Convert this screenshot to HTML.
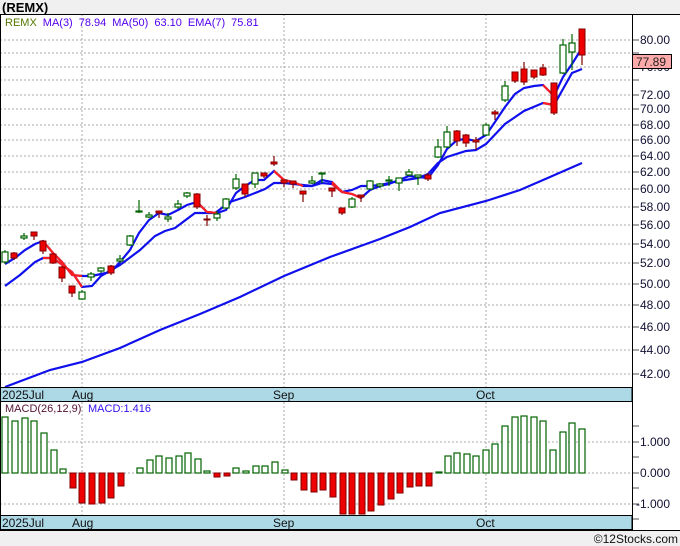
<!DOCTYPE html>
<html><head><meta charset="utf-8"><style>
html,body{margin:0;padding:0;background:#f0f0f0;}
svg{display:block;font-family:"Liberation Sans",sans-serif;}
.gr{stroke:#aaa;stroke-width:1;stroke-dasharray:2,2;}
.g rect{fill:#fff;stroke:#006400;stroke-width:1.2}
.g line{stroke:#006400;stroke-width:1.2}
.r rect{fill:#ee0000;stroke:#800000;stroke-width:1}
.r line{stroke:#800000;stroke-width:1.2}
.ax{font-size:12px;fill:#111133}
.tk{stroke:#555;stroke-width:1}
</style></head><body>
<svg width="680" height="546" viewBox="0 0 680 546" xmlns="http://www.w3.org/2000/svg">
<rect x="0" y="0" width="680" height="546" fill="#f0f0f0"/>
<text x="2" y="12" font-size="13" font-weight="bold" fill="#000">(REMX)</text>
<rect x="0" y="14" width="680" height="516" fill="#fff"/>
<!-- price grid -->
<g class="gr">
<line x1="0" x2="632" y1="40" y2="40"/><line x1="0" x2="632" y1="53" y2="53"/><line x1="0" x2="632" y1="67" y2="67"/><line x1="0" x2="632" y1="80" y2="80"/><line x1="0" x2="632" y1="95" y2="95"/><line x1="0" x2="632" y1="109" y2="109"/><line x1="0" x2="632" y1="125" y2="125"/><line x1="0" x2="632" y1="140" y2="140"/><line x1="0" x2="632" y1="156" y2="156"/><line x1="0" x2="632" y1="172" y2="172"/><line x1="0" x2="632" y1="189" y2="189"/><line x1="0" x2="632" y1="207" y2="207"/><line x1="0" x2="632" y1="225" y2="225"/><line x1="0" x2="632" y1="244" y2="244"/><line x1="0" x2="632" y1="263" y2="263"/><line x1="0" x2="632" y1="284" y2="284"/><line x1="0" x2="632" y1="305" y2="305"/><line x1="0" x2="632" y1="327" y2="327"/><line x1="0" x2="632" y1="350" y2="350"/><line x1="0" x2="632" y1="374" y2="374"/>
<line x1="82" x2="82" y1="14" y2="530"/><line x1="284" x2="284" y1="14" y2="530"/><line x1="486" x2="486" y1="14" y2="530"/>
<line x1="0" x2="632" y1="442" y2="442"/><line x1="0" x2="632" y1="473" y2="473"/><line x1="0" x2="632" y1="504" y2="504"/>
</g>
<text x="5" y="26" font-size="11"><tspan fill="#557700">REMX</tspan><tspan fill="#5500ee" dx="6">MA(3)</tspan><tspan fill="#5500ee" dx="6">78.94</tspan><tspan fill="#5500ee" dx="6">MA(50)</tspan><tspan fill="#5500ee" dx="6">63.10</tspan><tspan fill="#5500ee" dx="6">EMA(7)</tspan><tspan fill="#5500ee" dx="6">75.81</tspan></text>
<!-- MA50 -->
<polyline fill="none" stroke="#1010ee" stroke-width="2.2" points="5,387 50,370 82,362 120,348 160,330 200,314 240,297 284,276 330,257 380,239 410,227 440,213 486,201 520,190 550,177 582,163"/>
<!-- EMA7 -->
<polyline fill="none" stroke="#1010ee" stroke-width="2.2" points="5,286 20,275 35,262 43,258 53,258 72,272 82,287 92,286 101,276 120,265 140,250 155,236 165,231 175,228 195,213 215,213 230,202 245,197 265,189 274,183 284,183 303,185 312,186 322,183 332,184 342,192 352,190 361,186 370,186 380,185 399,181 418,178 428,174 438,163 447,157 466,151 476,150 486,144 505,124 524,111 543,103 554,105 563,89 572,73 582,69"/>
<polyline fill="none" stroke="#ff2020" stroke-width="2.2" points="43,258 53,258 72,272 82,287"/>
<polyline fill="none" stroke="#ff2020" stroke-width="2.2" points="332,184 342,192"/>
<polyline fill="none" stroke="#ff2020" stroke-width="2.2" points="543,103 554,105"/>
<!-- MA3 -->
<polyline fill="none" stroke="#1010ee" stroke-width="2.2" points="5,264 15,258 25,250 35,244 43,241 53,253 62,262 72,275 82,276 92,276 101,274 111,272 120,262 130,250 139,233 149,220 159,213 168,215 178,210 187,205 197,202 207,212 217,213 226,210 236,193 245,186 255,180 264,180 274,171 284,180 293,182 303,186 312,186 322,180 332,182 342,192 352,194 361,198 370,190 380,186 389,184 399,180 409,176 418,177 428,178 438,165 447,149 457,140 466,139 476,141 486,135 495,122 505,107 515,94 524,88 534,86 543,85 554,96 563,77 572,64 582,48"/>
<polyline fill="none" stroke="#ff2020" stroke-width="2.2" points="43,241 53,253 62,262 72,275 82,276"/>
<polyline fill="none" stroke="#ff2020" stroke-width="2.2" points="197,202 207,212 217,213"/>
<polyline fill="none" stroke="#ff2020" stroke-width="2.2" points="274,171 284,180 293,182 303,186"/>
<polyline fill="none" stroke="#ff2020" stroke-width="2.2" points="332,182 342,192 352,194 361,198"/>
<polyline fill="none" stroke="#ff2020" stroke-width="2.2" points="543,85 554,96"/>
<!-- candles -->
<g class="g">
<line x1="5" x2="5" y1="250" y2="264"/><rect x="2" y="252" width="6" height="10"/>
<line x1="24" x2="24" y1="233" y2="240"/><rect x="21" y="236" width="6" height="2"/>
<line x1="82" x2="82" y1="290" y2="300"/><rect x="79" y="292" width="6" height="7"/>
<line x1="91" x2="91" y1="272" y2="281"/><rect x="88" y="274" width="6" height="3"/>
<line x1="101" x2="101" y1="267" y2="273"/><rect x="98" y="268" width="6" height="3"/>
<line x1="120" x2="120" y1="255" y2="263"/><rect x="117" y="259" width="6" height="2"/>
<line x1="130" x2="130" y1="235" y2="246"/><rect x="127" y="236" width="6" height="9"/>
<line x1="139" x2="139" y1="200" y2="213"/><rect x="136" y="211" width="6" height="1"/>
<line x1="149" x2="149" y1="212" y2="218"/><rect x="146" y="215" width="6" height="2"/>
<line x1="168" x2="168" y1="213" y2="222"/><rect x="165" y="217" width="6" height="2"/>
<line x1="178" x2="178" y1="200" y2="209"/><rect x="175" y="204" width="6" height="3"/>
<line x1="187" x2="187" y1="192" y2="198"/><rect x="184" y="193" width="6" height="3"/>
<line x1="217" x2="217" y1="211" y2="221"/><rect x="214" y="214" width="6" height="4"/>
<line x1="226" x2="226" y1="198" y2="209"/><rect x="223" y="199" width="6" height="9"/>
<line x1="236" x2="236" y1="174" y2="190"/><rect x="233" y="179" width="6" height="9"/>
<line x1="255" x2="255" y1="173" y2="188"/><rect x="252" y="173" width="6" height="11"/>
<line x1="312" x2="312" y1="176" y2="184"/><rect x="309" y="181" width="6" height="2"/>
<line x1="322" x2="322" y1="173" y2="183"/><rect x="319" y="173" width="6" height="1"/>
<line x1="352" x2="352" y1="197" y2="208"/><rect x="349" y="199" width="6" height="8"/>
<line x1="370" x2="370" y1="180" y2="190"/><rect x="367" y="181" width="6" height="8"/>
<line x1="380" x2="380" y1="183" y2="188"/><rect x="377" y="184" width="6" height="2"/>
<line x1="389" x2="389" y1="176" y2="186"/><rect x="386" y="180" width="6" height="1"/>
<line x1="399" x2="399" y1="178" y2="191"/><rect x="396" y="178" width="6" height="5"/>
<line x1="409" x2="409" y1="169" y2="176"/><rect x="406" y="172" width="6" height="3"/>
<line x1="418" x2="418" y1="175" y2="185"/><rect x="415" y="175" width="6" height="2"/>
<line x1="438" x2="438" y1="139" y2="158"/><rect x="435" y="147" width="6" height="10"/>
<line x1="447" x2="447" y1="126" y2="148"/><rect x="444" y="132" width="6" height="15"/>
<line x1="486" x2="486" y1="123" y2="136"/><rect x="483" y="125" width="6" height="10"/>
<line x1="505" x2="505" y1="81" y2="102"/><rect x="502" y="86" width="6" height="14"/>
<line x1="563" x2="563" y1="39" y2="74"/><rect x="560" y="45" width="6" height="28"/>
<line x1="572" x2="572" y1="34" y2="70"/><rect x="569" y="43" width="6" height="9"/>
</g>
<g class="r">
<line x1="14" x2="14" y1="252" y2="260"/><rect x="11" y="253" width="6" height="5"/>
<line x1="34" x2="34" y1="232" y2="240"/><rect x="31" y="232" width="6" height="4"/>
<line x1="43" x2="43" y1="240" y2="254"/><rect x="40" y="241" width="6" height="10"/>
<line x1="53" x2="53" y1="253" y2="264"/><rect x="50" y="254" width="6" height="9"/>
<line x1="62" x2="62" y1="266" y2="282"/><rect x="59" y="267" width="6" height="11"/>
<line x1="72" x2="72" y1="286" y2="297"/><rect x="69" y="286" width="6" height="7"/>
<line x1="111" x2="111" y1="265" y2="275"/><rect x="108" y="266" width="6" height="7"/>
<line x1="159" x2="159" y1="211" y2="218"/><rect x="156" y="211" width="6" height="2"/>
<line x1="197" x2="197" y1="193" y2="209"/><rect x="194" y="194" width="6" height="13"/>
<line x1="207" x2="207" y1="215" y2="226"/><rect x="204" y="219" width="6" height="1"/>
<line x1="245" x2="245" y1="184" y2="197"/><rect x="242" y="184" width="6" height="10"/>
<line x1="264" x2="264" y1="173" y2="178"/><rect x="261" y="173" width="6" height="3"/>
<line x1="274" x2="274" y1="156" y2="166"/><rect x="271" y="162" width="6" height="2"/>
<line x1="284" x2="284" y1="180" y2="187"/><rect x="281" y="180" width="6" height="3"/>
<line x1="293" x2="293" y1="181" y2="188"/><rect x="290" y="181" width="6" height="3"/>
<line x1="303" x2="303" y1="191" y2="202"/><rect x="300" y="191" width="6" height="3"/>
<line x1="332" x2="332" y1="188" y2="197"/><rect x="329" y="188" width="6" height="3"/>
<line x1="342" x2="342" y1="208" y2="215"/><rect x="339" y="208" width="6" height="5"/>
<line x1="361" x2="361" y1="195" y2="202"/><rect x="358" y="195" width="6" height="2"/>
<line x1="428" x2="428" y1="173" y2="181"/><rect x="425" y="175" width="6" height="4"/>
<line x1="457" x2="457" y1="130" y2="146"/><rect x="454" y="131" width="6" height="10"/>
<line x1="466" x2="466" y1="134" y2="147"/><rect x="463" y="135" width="6" height="8"/>
<line x1="476" x2="476" y1="137" y2="150"/><rect x="473" y="140" width="6" height="2"/>
<line x1="495" x2="495" y1="110" y2="120"/><rect x="492" y="112" width="6" height="2"/>
<line x1="515" x2="515" y1="72" y2="83"/><rect x="512" y="72" width="6" height="9"/>
<line x1="524" x2="524" y1="62" y2="85"/><rect x="521" y="69" width="6" height="13"/>
<line x1="534" x2="534" y1="70" y2="79"/><rect x="531" y="70" width="6" height="7"/>
<line x1="543" x2="543" y1="64" y2="76"/><rect x="540" y="68" width="6" height="7"/>
<line x1="554" x2="554" y1="83" y2="115"/><rect x="551" y="83" width="6" height="30"/>
<line x1="582" x2="582" y1="29" y2="65"/><rect x="579" y="29" width="6" height="26"/>
</g>
<!-- right axis -->
<g class="tk">
<line x1="632" x2="639" y1="40" y2="40"/><line x1="632" x2="639" y1="53" y2="53"/><line x1="632" x2="639" y1="67" y2="67"/><line x1="632" x2="639" y1="80" y2="80"/><line x1="632" x2="639" y1="95" y2="95"/><line x1="632" x2="639" y1="109" y2="109"/><line x1="632" x2="639" y1="125" y2="125"/><line x1="632" x2="639" y1="140" y2="140"/><line x1="632" x2="639" y1="156" y2="156"/><line x1="632" x2="639" y1="172" y2="172"/><line x1="632" x2="639" y1="189" y2="189"/><line x1="632" x2="639" y1="207" y2="207"/><line x1="632" x2="639" y1="225" y2="225"/><line x1="632" x2="639" y1="244" y2="244"/><line x1="632" x2="639" y1="263" y2="263"/><line x1="632" x2="639" y1="284" y2="284"/><line x1="632" x2="639" y1="305" y2="305"/><line x1="632" x2="639" y1="327" y2="327"/><line x1="632" x2="639" y1="350" y2="350"/><line x1="632" x2="639" y1="374" y2="374"/>
<line x1="632" x2="639" y1="426" y2="426"/><line x1="632" x2="639" y1="442" y2="442"/><line x1="632" x2="639" y1="457" y2="457"/><line x1="632" x2="639" y1="473" y2="473"/><line x1="632" x2="639" y1="488" y2="488"/><line x1="632" x2="639" y1="504" y2="504"/><line x1="632" x2="639" y1="519" y2="519"/>
</g>
<g class="ax">
<text x="640" y="44">80.00</text><text x="640" y="71">76.00</text><text x="640" y="99">72.00</text><text x="640" y="113">70.00</text><text x="640" y="129">68.00</text><text x="640" y="144">66.00</text><text x="640" y="160">64.00</text><text x="640" y="176">62.00</text><text x="640" y="193">60.00</text><text x="640" y="211">58.00</text><text x="640" y="229">56.00</text><text x="640" y="248">54.00</text><text x="640" y="267">52.00</text><text x="640" y="288">50.00</text><text x="640" y="309">48.00</text><text x="640" y="331">46.00</text><text x="640" y="354">44.00</text><text x="640" y="378">42.00</text>
<text x="640" y="446">1.000</text><text x="640" y="477">0.000</text><text x="636" y="508">-1.000</text>
</g>
<rect x="632.5" y="54.5" width="39" height="14" fill="#ffaaaa" stroke="#000"/>
<text x="636" y="66" font-size="12" fill="#222">77.89</text>
<!-- MACD bars -->
<g fill="#fff" stroke="#006400" stroke-width="1.2">
<rect x="2" y="417" width="6" height="56"/><rect x="12" y="421" width="6" height="52"/><rect x="22" y="418" width="6" height="55"/><rect x="31" y="421" width="6" height="52"/><rect x="41" y="433" width="6" height="40"/><rect x="51" y="450" width="6" height="23"/><rect x="60" y="469" width="6" height="4"/>
<rect x="137" y="468" width="6" height="5"/><rect x="147" y="460" width="6" height="13"/><rect x="156" y="456" width="6" height="17"/><rect x="166" y="458" width="6" height="15"/><rect x="176" y="456" width="6" height="17"/><rect x="185" y="453" width="6" height="20"/><rect x="195" y="459" width="6" height="14"/><rect x="204" y="471" width="6" height="2"/>
<rect x="233" y="468" width="6" height="5"/><rect x="243" y="471" width="6" height="2"/><rect x="253" y="466" width="6" height="7"/><rect x="262" y="466" width="6" height="7"/><rect x="272" y="462" width="6" height="11"/><rect x="282" y="470" width="6" height="3"/>
<rect x="436" y="472" width="6" height="1"/><rect x="445" y="456" width="6" height="17"/><rect x="454" y="453" width="6" height="20"/><rect x="464" y="454" width="6" height="19"/><rect x="473" y="456" width="6" height="17"/><rect x="483" y="450" width="6" height="23"/><rect x="492" y="444" width="6" height="29"/><rect x="502" y="426" width="6" height="47"/><rect x="512" y="417" width="6" height="56"/><rect x="521" y="416" width="6" height="57"/><rect x="531" y="417" width="6" height="56"/><rect x="540" y="421" width="6" height="52"/><rect x="550" y="450" width="6" height="23"/><rect x="560" y="432" width="6" height="41"/><rect x="569" y="423" width="6" height="50"/><rect x="579" y="429" width="6" height="44"/>
</g>
<g fill="#ee0000" stroke="#800000" stroke-width="1">
<rect x="70" y="473" width="6" height="15"/><rect x="79" y="473" width="6" height="30"/><rect x="89" y="473" width="6" height="31"/><rect x="99" y="473" width="6" height="30"/><rect x="108" y="473" width="6" height="25"/><rect x="118" y="473" width="6" height="13"/>
<rect x="214" y="473" width="6" height="4"/><rect x="224" y="473" width="6" height="3"/>
<rect x="291" y="473" width="6" height="7"/><rect x="301" y="473" width="6" height="17"/><rect x="311" y="473" width="6" height="19"/><rect x="320" y="473" width="6" height="17"/><rect x="330" y="473" width="6" height="24"/><rect x="340" y="473" width="6" height="41"/><rect x="349" y="473" width="6" height="41"/><rect x="359" y="473" width="6" height="41"/><rect x="368" y="473" width="6" height="38"/><rect x="378" y="473" width="6" height="32"/><rect x="388" y="473" width="6" height="26"/><rect x="397" y="473" width="6" height="20"/><rect x="407" y="473" width="6" height="14"/><rect x="416" y="473" width="6" height="13"/><rect x="426" y="473" width="6" height="13"/>
</g>
<text x="5" y="412" font-size="11" fill="#551133">MACD(26,12,9)</text>
<text x="88" y="412" font-size="11" fill="#3311ee">MACD:1.416</text>
<!-- date bands -->
<rect x="0" y="387.5" width="632" height="14" fill="#add8e6" stroke="#000"/>
<rect x="0" y="515.5" width="632" height="14" fill="#add8e6" stroke="#000"/>
<g font-size="12" fill="#111">
<text x="2" y="399">2025Jul</text><text x="72" y="399">Aug</text><text x="273" y="399">Sep</text><text x="476" y="399">Oct</text>
<text x="2" y="527">2025Jul</text><text x="72" y="527">Aug</text><text x="273" y="527">Sep</text><text x="476" y="527">Oct</text>
</g>
<line x1="632.5" x2="632.5" y1="14" y2="530" stroke="#000"/>
<line x1="0" x2="680" y1="14.5" y2="14.5" stroke="#000"/>
<line x1="0.5" x2="0.5" y1="14" y2="530" stroke="#000"/>
<line x1="0" x2="680" y1="530.5" y2="530.5" stroke="#000"/>
<text x="678" y="543" font-size="12" fill="#111" text-anchor="end">©12Stocks.com</text>
</svg>
</body></html>
